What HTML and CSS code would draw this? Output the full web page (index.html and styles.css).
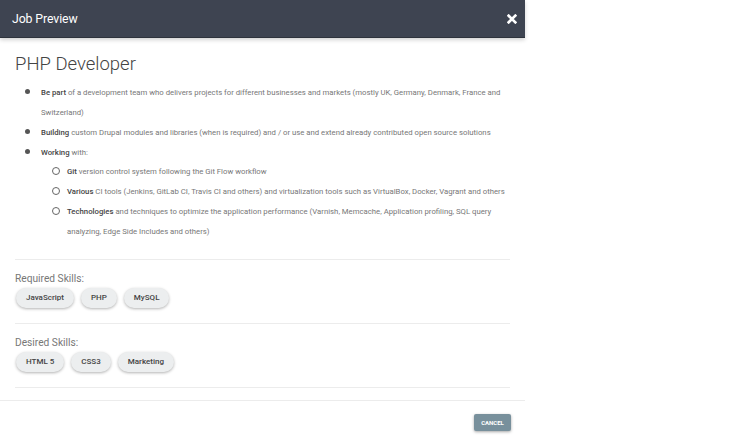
FILE: index.html
```html
<!DOCTYPE html>
<html>
<head>
<meta charset="utf-8">
<link rel="stylesheet" href="styles.css">
</head>
<body>
<div class="modal">
  <header class="modal-head">
    <span class="modal-title">Job Preview</span>
    <button class="close" aria-label="Close">
      <svg width="10" height="10" viewBox="0 0 12 12"><path d="M2 2 L10 10 M10 2 L2 10" stroke="#fff" stroke-width="3.2" stroke-linecap="square"/></svg>
    </button>
  </header>
  <div class="modal-body">
    <h1 class="job-title">PHP Developer</h1>
    <ul class="desc">
      <li><b>Be part</b> of a development team who delivers projects for different businesses and markets (mostly UK, Germany, Denmark, France and Switzerland)</li>
      <li><b>Building</b> custom Drupal modules and libraries (when is required) and / or use and extend already contributed open source solutions</li>
      <li><b>Working</b> with:
        <ul class="sub">
          <li><b>Git</b> version control system following the Git Flow workflow</li>
          <li><b>Various</b> CI tools (Jenkins, GitLab CI, Travis CI and others) and virtualization tools such as VirtualBox, Docker, Vagrant and others</li>
          <li><b>Technologies</b> and techniques to optimize the application performance (Varnish, Memcache, Application profiling, SQL query analyzing, Edge Side Includes and others)</li>
        </ul>
      </li>
    </ul>
    <section class="skills">
      <h3 class="skills-label">Required Skills:</h3>
      <div class="chips">
        <span class="chip">JavaScript</span>
        <span class="chip">PHP</span>
        <span class="chip">MySQL</span>
      </div>
    </section>
    <section class="skills">
      <h3 class="skills-label">Desired Skills:</h3>
      <div class="chips">
        <span class="chip">HTML 5</span>
        <span class="chip">CSS3</span>
        <span class="chip">Marketing</span>
      </div>
    </section>
    <div class="end-rule"></div>
  </div>
  <footer class="modal-foot">
    <button class="btn-cancel">CANCEL</button>
  </footer>
</div>
</body>
</html>
```
FILE: styles.css
```css
* { box-sizing: border-box; }
html, body { margin: 0; padding: 0; background: #fff; }
body { font-family: Roboto, "Noto Sans", sans-serif; color: #666; }

.modal {
  width: 525px;
  background: #fff;
}

.modal-head {
  height: 38px;
  background: #3e4451;
  border-bottom: 1px solid #2e333c;
  box-shadow: 0 2px 4px rgba(0,0,0,0.18);
  display: flex;
  align-items: center;
  justify-content: space-between;
  padding: 0 8px 0 12px;
  position: relative;
}
.modal-title { color: #fff; font-size: 12.3px; letter-spacing: -0.1px; }
.close {
  background: none; border: 0; padding: 0;
  width: 10px; height: 10px;
  display: flex; align-items: center; justify-content: center;
}

.modal-body { padding: 14px 15px 0 15px; }

.job-title {
  margin: 0;
  font-size: 18.5px;
  font-weight: 300;
  color: #444;
  line-height: 24px;
}

.desc {
  margin: 7px 0 0 0;
  padding: 0 0 0 26px;
  list-style: none;
  font-size: 7.75px;
  line-height: 19.85px;
  color: #777;
}
.desc b { font-weight: 500; color: #444; }
.desc > li { position: relative; }
.desc > li::before {
  content: "";
  position: absolute;
  left: -16px; top: 6px;
  width: 5px; height: 5px;
  border-radius: 50%;
  background: #555;
}
.sub { list-style: none; margin: 0; padding: 0 0 0 26px; }
.sub > li { position: relative; }
.sub > li::before {
  content: "";
  position: absolute;
  left: -15px; top: 5px;
  width: 6px; height: 6px;
  border-radius: 50%;
  border: 1px solid #666;
}

.skills {
  border-top: 1px solid #ececec;
  margin-top: 17px;
  padding-top: 12px;
  padding-bottom: 15px;
}
.skills + .skills { margin-top: 0; }
.skills-label {
  margin: 0 0 2px 0;
  font-size: 10.2px;
  font-weight: 400;
  color: #777;
  line-height: 14px;
}
.chips { display: flex; gap: 7px; padding-left: 1px; }
.chip {
  height: 20px;
  line-height: 20px;
  padding: 0 10px;
  border-radius: 10px;
  background: #eceeef;
  box-shadow: 0 1px 3px rgba(0,0,0,0.3);
  font-size: 8px;
  font-weight: 500;
  color: #444;
}

.end-rule { border-top: 1px solid #ececec; height: 13px; }

.modal-foot {
  border-top: 1px solid #ececec;
  display: flex;
  justify-content: flex-end;
  padding: 13px 14px 13px 0;
}
.btn-cancel {
  background: #78909c;
  color: #fff;
  border: 0;
  font-family: Roboto, sans-serif;
  font-size: 6px;
  font-weight: 700;
  width: 37px; height: 17px;
  padding: 0;
  border-radius: 2px;
  box-shadow: 0 1px 3px rgba(0,0,0,0.35);
}
```
